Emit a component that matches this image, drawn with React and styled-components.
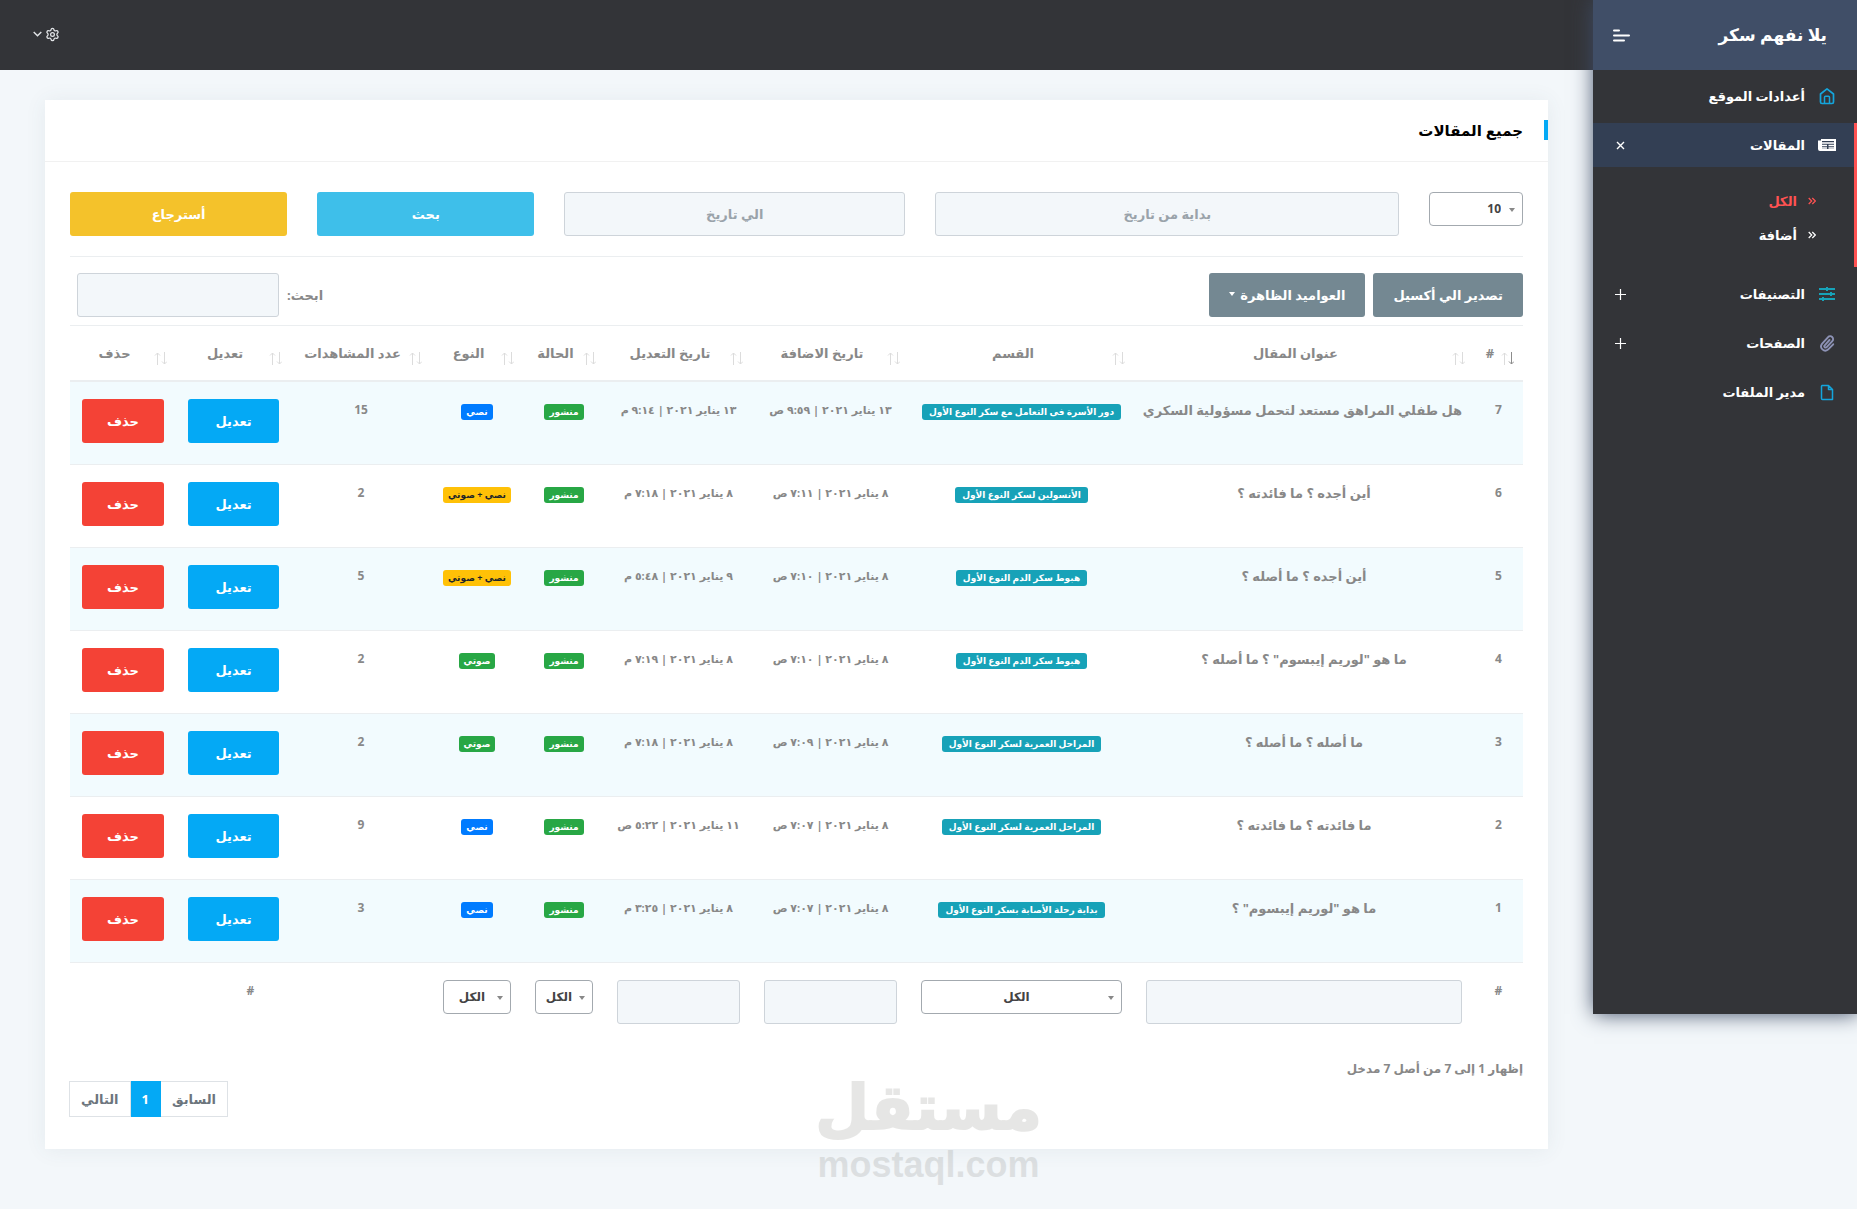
import React from 'react';
import styled, { createGlobalStyle, css } from 'styled-components';
import { Settings } from 'lucide-react';

const colors = {
  dark: '#333438',
  brand: '#404e67',
  active: '#333f54',
  page: '#f3f7fa',
  text: '#888888',
  border: '#ebeef0',
  blue: '#04a9f5',
  red: '#f44236',
  accent: '#ff5252',
};

const GlobalStyle = createGlobalStyle`
  * {
    box-sizing: border-box;
  }

  body {
    margin: 0;
    background: ${colors.page};
    color: ${colors.text};
    font-family: 'Open Sans', 'DejaVu Sans', sans-serif;
    font-size: 13px;
    font-weight: 700;
    line-height: 22px;
  }

  button, input, select {
    font: inherit;
  }
`;

const Layout = styled.div`
  position: relative;
  display: flex;
  align-items: flex-start;
  min-height: 100vh;
`;

const Sidebar = styled.nav`
  position: relative;
  z-index: 2;
  flex: 0 0 264px;
  min-height: calc(100vh - 195px);
  background: ${colors.dark};
  box-shadow: 1px 0 20px 0 #3f4d67;
`;

const Brand = styled.div`
  display: flex;
  align-items: center;
  justify-content: space-between;
  height: 70px;
  margin-bottom: 4px;
  padding: 0 30px 0 20px;
  background: ${colors.brand};
  color: #fff;
  font-size: 17px;
`;

const IconButton = styled.button`
  display: flex;
  align-items: center;
  gap: 3px;
  padding: 0;
  border: 0;
  background: none;
  color: #e3e5e8;
  cursor: pointer;
`;

const MenuGroup = styled.div`
  margin-bottom: 5px;
  ${props => props.$active && css`
    box-shadow: inset -3px 0 0 ${colors.accent};
  `}
`;

const MenuLink = styled.a`
  display: flex;
  align-items: center;
  gap: 12px;
  height: 44px;
  margin-right: ${props => (props.$active ? '3px' : '0')};
  padding: 0 ${props => (props.$active ? '18px' : '21px')} 0 22px;
  background: ${props => (props.$active ? colors.active : 'transparent')};
  color: #fff;
  text-decoration: none;
`;

const MenuIcon = styled.span`
  display: flex;
  justify-content: center;
  width: 19px;
`;

const MenuText = styled.span`
  flex: 1;
`;

const SubMenu = styled.div`
  padding: 17px 41px 15px 0;
`;

const SubLink = styled.a`
  display: flex;
  align-items: center;
  gap: 11px;
  height: 34px;
  color: ${props => (props.$active ? colors.accent : '#fff')};
  text-decoration: none;
`;

const Main = styled.main`
  flex: 1;
  min-width: 0;
`;

const TopBar = styled.header`
  display: flex;
  align-items: center;
  justify-content: flex-end;
  height: 70px;
  padding: 0 33px 2px;
  background: ${colors.dark};
`;

const Content = styled.div`
  padding: 30px 45px 60px;
`;

const Card = styled.section`
  background: #fff;
  box-shadow: 0 1px 20px 0 rgba(69, 90, 100, 0.08);
`;

const CardHeader = styled.div`
  display: flex;
  align-items: center;
  gap: 21px;
  height: 62px;
  padding-bottom: 2px;
  border-bottom: 1px solid #f1f1f1;
`;

const HeaderMark = styled.span`
  width: 4px;
  height: 20px;
  background: ${colors.blue};
`;

const Title = styled.h1`
  margin: 0;
  color: #000;
  font-size: 15px;
`;

const CardBody = styled.div`
  padding: 30px 25px 32px;
`;

const Filters = styled.form`
  display: grid;
  grid-template-columns: repeat(12, 1fr);
  align-items: start;
  gap: 30px;
  padding-bottom: 20px;
  border-bottom: 1px solid ${colors.border};
`;

const Cell = styled.div`
  grid-column: span ${props => props.$span};
  display: flex;
`;

const Input = styled.input`
  width: 100%;
  min-width: 0;
  height: 44px;
  padding: 0 16px;
  border: 1px solid #ced4da;
  border-radius: 3px;
  background: ${colors.page};
  color: #495057;
  text-align: center;

  &::placeholder {
    color: #9aa3aa;
  }
`;

const Button = styled.button`
  width: ${props => (props.$block ? '100%' : 'auto')};
  height: 44px;
  padding: 0 20px;
  border: 0;
  border-radius: 3px;
  background: ${props => props.$color};
  color: #fff;
  white-space: nowrap;
  cursor: pointer;
`;

const SelectBox = styled.div`
  position: relative;
  width: 100%;
  height: 33px;

  svg {
    position: absolute;
    top: 16px;
    right: 8px;
    pointer-events: none;
  }
`;

const Select = styled.select`
  appearance: none;
  width: 100%;
  height: 34px;
  padding: 0 ${props => (props.$start ? '21px' : '20px')} 0 10px;
  border: 1px solid #a3a9af;
  border-radius: 4px;
  background: #fff;
  color: #444;
  font-size: 12px;
  text-align: ${props => (props.$start ? 'right' : 'center')};
`;

const Toolbar = styled.div`
  display: flex;
  align-items: center;
  justify-content: space-between;
  padding: 16px 0 8px 7px;
`;

const ButtonGroup = styled.div`
  display: flex;
  gap: 8px;

  svg {
    margin-right: 5px;
    vertical-align: 4px;
  }
`;

const SearchLabel = styled.label`
  display: flex;
  align-items: center;
  gap: 8px;

  input {
    width: 202px;
  }
`;

const Table = styled.table`
  width: 100%;
  table-layout: fixed;
  border-spacing: 0;
  text-align: center;
  white-space: nowrap;
`;

const Th = styled.th`
  height: 57px;
  padding: 0 9px 0 12px;
  border-top: 1px solid ${colors.border};
  border-bottom: 2px solid ${colors.border};
`;

const HeadCell = styled.div`
  display: flex;
  align-items: center;

  svg {
    flex: none;
    margin: 10px 0 0 7px;
  }

  span {
    display: flex;
    flex: 1;
    justify-content: center;
    min-width: 0;
  }
`;

const Row = styled.tr`
  background: ${props => (props.$odd ? '#f2fbfe' : '#fff')};
`;

const Td = styled.td`
  height: 83px;
  padding: 17px 12px 0;
  border-bottom: 1px solid ${props => (props.$plain ? 'transparent' : colors.border)};
  font-size: ${props => props.$size || 13}px;
  vertical-align: top;
`;

const Badge = styled.span`
  display: inline-block;
  height: 16px;
  padding: 0 ${props => (props.$wide ? 7 : 5)}px;
  border-radius: 3px;
  background: ${props => props.$color};
  color: ${props => (props.$dark ? '#212529' : '#fff')};
  font-size: 9px;
  line-height: 16px;
  vertical-align: middle;
`;

const Info = styled.div`
  padding-top: 12px;
  font-size: 12px;
`;

const Pagination = styled.div`
  display: flex;
  justify-content: flex-end;
  margin: 1px 0 0;
`;

const PageLink = styled.a`
  margin-left: -1px;
  padding: 6px 11px;
  border: 1px solid ${props => (props.$active ? colors.blue : '#dee2e6')};
  background: ${props => (props.$active ? colors.blue : '#fff')};
  color: ${props => (props.$active ? '#fff' : '#6c757d')};
  text-decoration: none;
`;

const Watermark = styled.div`
  position: absolute;
  left: 0;
  right: 0;
  bottom: 21px;
  z-index: 3;
  display: flex;
  flex-direction: column;
  align-items: center;
  color: #3c3c32;
  font-family: 'Liberation Sans', 'DejaVu Sans', sans-serif;
  opacity: 0.12;
  pointer-events: none;
`;

const WatermarkName = styled.div`
  font-size: 62px;
  line-height: 68px;
  -webkit-text-stroke: 2px #3c3c32;
`;

const WatermarkSite = styled.div`
  font-size: 36px;
  line-height: 46px;
`;

const HomeIcon = () => (
  <svg width="16" height="18" viewBox="0 0 16 18" fill="none" stroke="#14a5dc" strokeWidth="1.7">
    <path d="M1.500 7 8 1.800 14.500 7v8a1.500 1.500 0 0 1-1.500 1.500H3A1.500 1.500 0 0 1 1.500 15Z" strokeLinejoin="round" />
    <path d="M5.500 16.500v-6.200a1 1 0 0 1 1-1h3a1 1 0 0 1 1 1v6.200" strokeWidth="1.500" />
  </svg>
);

const NewsIcon = () => (
  <svg width="18" height="12" viewBox="0 0 18 12" fill="none" stroke="#fff">
    <path d="M3 1h14v10H2a1 1 0 0 1-1-1V2.500h2V10" strokeWidth="2" />
    <path d="M4 4h12M4 6.500h5M10.500 6.500H16M4 9h5M10.500 9H16" strokeWidth="1.400" />
  </svg>
);

const SlidersIcon = () => (
  <svg width="16" height="14" viewBox="0 0 16 14" stroke="#17a2b8" strokeWidth="2">
    <path d="M0 2h16M0 7h16M0 12h16" />
    <path d="M8 0v4M12 5v4M4 10v4" />
  </svg>
);

const ClipIcon = () => (
  <svg width="16" height="17" viewBox="0 0 16 17" fill="none" stroke="#8d92b5" strokeWidth="1.900" strokeLinecap="round">
    <path d="M10.500 5 5.700 10.300a1.300 1.300 0 0 0 2 1.900l5.600-6.100a2.800 2.800 0 0 0-4.200-3.900L3 8.800a4.200 4.200 0 0 0 6 5.800l5.200-5.300" />
  </svg>
);

const FileIcon = () => (
  <svg width="14" height="17" viewBox="0 0 14 17" fill="none" stroke="#14a5dc" strokeWidth="1.500" strokeLinejoin="round">
    <path d="M2 1.500h6.500L12.500 5.500v10H2.500a1 1 0 0 1-1-1V2.500a1 1 0 0 1 1-1ZM8.500 1.500v4h4" />
  </svg>
);

const BarsIcon = () => (
  <svg width="17" height="13" viewBox="0 0 17 13" stroke="#fff" strokeWidth="2" strokeLinecap="round">
    <path d="M1 1.500h5M1 6.500h15M1 11.500h10" />
  </svg>
);

const PlusIcon = () => (
  <svg width="11" height="11" viewBox="0 0 11 11" stroke="#fff" strokeWidth="1.200">
    <path d="M5.500 0v11M0 5.500h11" />
  </svg>
);

const CloseIcon = () => (
  <svg width="11" height="9" viewBox="0 0 11 9" stroke="#fff" strokeWidth="1.400">
    <path d="m2 1 7 7M9 1 2 8" />
  </svg>
);

const ChevronsIcon = () => (
  <svg width="8" height="8" viewBox="0 0 8 8" fill="none" stroke="currentColor" strokeWidth="1.200">
    <path d="m.7 1 3 3-3 3M4.300 1l3 3-3 3" />
  </svg>
);

const ChevronDown = () => (
  <svg width="9" height="6" viewBox="0 0 9 6" fill="none" stroke="#e3e5e8" strokeWidth="1.400">
    <path d="m.7 1 3.800 3.800L8.300 1" />
  </svg>
);

const Caret = ({ color }) => (
  <svg width="6" height="4" viewBox="0 0 6 4" fill={color}>
    <path d="M0 0h6L3 4Z" />
  </svg>
);

const SortIcon = ({ active }) => (
  <svg width="13" height="13" viewBox="0 0 13 13" fill="none" stroke="#dcdcdc">
    <path d="M3.500 13V1M1 3.500 3.500 1 6 3.500" />
    <path d="M10.500 0v12M8 9.500l2.500 2.500L13 9.500" stroke={active ? '#8c8c8c' : '#dcdcdc'} />
  </svg>
);

const Dropdown = ({ label, value, start }) => (
  <SelectBox>
    <Select aria-label={label} defaultValue={value} $start={start}>
      <option value={value}>{value}</option>
    </Select>
    <Caret color="#888" />
  </SelectBox>
);

const kinds = {
  text: { label: 'نصي', color: '#007bff' },
  audio: { label: 'صوتي', color: '#28a745' },
  both: { label: 'نصي + صوتي', color: '#ffc107', dark: true },
};

const columns = [
  { name: '#', width: 49 },
  { name: 'عنوان المقال', width: 340 },
  { name: 'القسم', width: 225 },
  { name: 'تاريخ الاضافة', width: 157 },
  { name: 'تاريخ التعديل', width: 147 },
  { name: 'الحالة', width: 82 },
  { name: 'النوع', width: 92 },
  { name: 'عدد المشاهدات', width: 140 },
  { name: 'تعديل', width: 115 },
  { name: 'حذف', width: 106 },
];

const articles = [
  { id: 7, title: 'هل طفلي المراهق مستعد لتحمل مسؤولية السكري', section: 'دور الأسرة فى التعامل مع سكر النوع الأول', added: '١٣ يناير ٢٠٢١ | ٩:٥٩ ص', edited: '١٣ يناير ٢٠٢١ | ٩:١٤ م', kind: 'text', views: 15 },
  { id: 6, title: 'أين أجده ؟ ما فائدته ؟', section: 'الأنسولين لسكر النوع الأول', added: '٨ يناير ٢٠٢١ | ٧:١١ ص', edited: '٨ يناير ٢٠٢١ | ٧:١٨ م', kind: 'both', views: 2 },
  { id: 5, title: 'أين أجده ؟ ما أصله ؟', section: 'هبوط سكر الدم النوع الأول', added: '٨ يناير ٢٠٢١ | ٧:١٠ ص', edited: '٩ يناير ٢٠٢١ | ٥:٤٨ م', kind: 'both', views: 5 },
  { id: 4, title: 'ما هو "لوريم إيبسوم" ؟ ما أصله ؟', section: 'هبوط سكر الدم النوع الأول', added: '٨ يناير ٢٠٢١ | ٧:١٠ ص', edited: '٨ يناير ٢٠٢١ | ٧:١٩ م', kind: 'audio', views: 2 },
  { id: 3, title: 'ما أصله ؟ ما أصله ؟', section: 'المراحل العمرية لسكر النوع الأول', added: '٨ يناير ٢٠٢١ | ٧:٠٩ ص', edited: '٨ يناير ٢٠٢١ | ٧:١٨ م', kind: 'audio', views: 2 },
  { id: 2, title: 'ما فائدته ؟ ما فائدته ؟', section: 'المراحل العمرية لسكر النوع الأول', added: '٨ يناير ٢٠٢١ | ٧:٠٧ ص', edited: '١١ يناير ٢٠٢١ | ٥:٢٢ ص', kind: 'text', views: 9 },
  { id: 1, title: 'ما هو "لوريم إيبسوم" ؟', section: 'بداية رحلة الأصابة بسكر النوع الأول', added: '٨ يناير ٢٠٢١ | ٧:٠٧ ص', edited: '٨ يناير ٢٠٢١ | ٣:٢٥ م', kind: 'text', views: 3 },
];

const SideNav = () => (
  <Sidebar>
    <Brand>
      <span>يلا نفهم سكر</span>
      <IconButton type="button" aria-label="القائمة"><BarsIcon /></IconButton>
    </Brand>
    <MenuGroup>
      <MenuLink href="#settings">
        <MenuIcon><HomeIcon /></MenuIcon>
        <MenuText>أعدادات الموقع</MenuText>
      </MenuLink>
    </MenuGroup>
    <MenuGroup $active>
      <MenuLink href="#articles" $active>
        <MenuIcon><NewsIcon /></MenuIcon>
        <MenuText>المقالات</MenuText>
        <CloseIcon />
      </MenuLink>
      <SubMenu>
        <SubLink href="#all" $active><ChevronsIcon />الكل</SubLink>
        <SubLink href="#add"><ChevronsIcon />أضافة</SubLink>
      </SubMenu>
    </MenuGroup>
    <MenuGroup>
      <MenuLink href="#categories">
        <MenuIcon><SlidersIcon /></MenuIcon>
        <MenuText>التصنيفات</MenuText>
        <PlusIcon />
      </MenuLink>
    </MenuGroup>
    <MenuGroup>
      <MenuLink href="#pages">
        <MenuIcon><ClipIcon /></MenuIcon>
        <MenuText>الصفحات</MenuText>
        <PlusIcon />
      </MenuLink>
    </MenuGroup>
    <MenuGroup>
      <MenuLink href="#files">
        <MenuIcon><FileIcon /></MenuIcon>
        <MenuText>مدير الملفات</MenuText>
      </MenuLink>
    </MenuGroup>
  </Sidebar>
);

const ArticleRow = ({ article, odd }) => {
  const kind = kinds[article.kind];

  return (
    <Row $odd={odd}>
      <Td $size={12}>{article.id}</Td>
      <Td>{article.title}</Td>
      <Td><Badge $color="#17a2b8" $wide>{article.section}</Badge></Td>
      <Td $size={11}>{article.added}</Td>
      <Td $size={11}>{article.edited}</Td>
      <Td><Badge $color="#28a745">منشور</Badge></Td>
      <Td><Badge $color={kind.color} $dark={kind.dark}>{kind.label}</Badge></Td>
      <Td $size={12}>{article.views}</Td>
      <Td><Button type="button" $block $color={colors.blue}>تعديل</Button></Td>
      <Td><Button type="button" $block $color={colors.red}>حذف</Button></Td>
    </Row>
  );
};

const ArticlesTable = () => (
  <Table>
    <colgroup>
      {columns.map(column => <col key={column.name} width={column.width} />)}
    </colgroup>
    <thead>
      <tr>
        {columns.map((column, index) => (
          <Th key={column.name}>
            <HeadCell>
              <SortIcon active={index === 0} />
              <span>{column.name}</span>
            </HeadCell>
          </Th>
        ))}
      </tr>
    </thead>
    <tbody>
      {articles.map((article, index) => (
        <ArticleRow key={article.id} article={article} odd={index % 2 === 0} />
      ))}
    </tbody>
    <tfoot>
      <tr>
        <Td $plain $size={12}>#</Td>
        <Td $plain><Input aria-label="عنوان المقال" /></Td>
        <Td $plain><Dropdown label="القسم" value="الكل" /></Td>
        <Td $plain><Input aria-label="تاريخ الاضافة" /></Td>
        <Td $plain><Input aria-label="تاريخ التعديل" /></Td>
        <Td $plain><Dropdown label="الحالة" value="الكل" /></Td>
        <Td $plain><Dropdown label="النوع" value="الكل" /></Td>
        <Td $plain $size={12} colSpan={3}>#</Td>
      </tr>
    </tfoot>
  </Table>
);

const App = () => (
  <>
    <GlobalStyle />
    <Layout dir="rtl" lang="ar">
      <SideNav />
      <Main>
        <TopBar>
          <IconButton type="button" aria-label="الإعدادات">
            <Settings size={15} />
            <ChevronDown />
          </IconButton>
        </TopBar>
        <Content>
          <Card>
            <CardHeader>
              <HeaderMark />
              <Title>جميع المقالات</Title>
            </CardHeader>
            <CardBody>
              <Filters>
                <Cell $span={1}><Dropdown label="عدد الصفوف" value="10" start /></Cell>
                <Cell $span={4}><Input aria-label="بداية من تاريخ" placeholder="بداية من تاريخ" /></Cell>
                <Cell $span={3}><Input aria-label="الي تاريخ" placeholder="الي تاريخ" /></Cell>
                <Cell $span={2}><Button type="button" $block $color="#3ebfea">بحث</Button></Cell>
                <Cell $span={2}><Button type="reset" $block $color="#f4c22b">أسترجاع</Button></Cell>
              </Filters>
              <Toolbar>
                <ButtonGroup>
                  <Button type="button" $color="#748892">تصدير الي أكسيل</Button>
                  <Button type="button" $color="#748892">العواميد الظاهرة<Caret color="#fff" /></Button>
                </ButtonGroup>
                <SearchLabel>
                  ابحث:
                  <Input type="search" />
                </SearchLabel>
              </Toolbar>
              <ArticlesTable />
              <Info>إظهار 1 إلى 7 من أصل 7 مدخل</Info>
              <Pagination>
                <PageLink href="#prev">السابق</PageLink>
                <PageLink href="#1" $active>1</PageLink>
                <PageLink href="#next">التالي</PageLink>
              </Pagination>
            </CardBody>
          </Card>
        </Content>
      </Main>
      <Watermark>
        <WatermarkName>مستقل</WatermarkName>
        <WatermarkSite>mostaql.com</WatermarkSite>
      </Watermark>
    </Layout>
  </>
);

export default App;
